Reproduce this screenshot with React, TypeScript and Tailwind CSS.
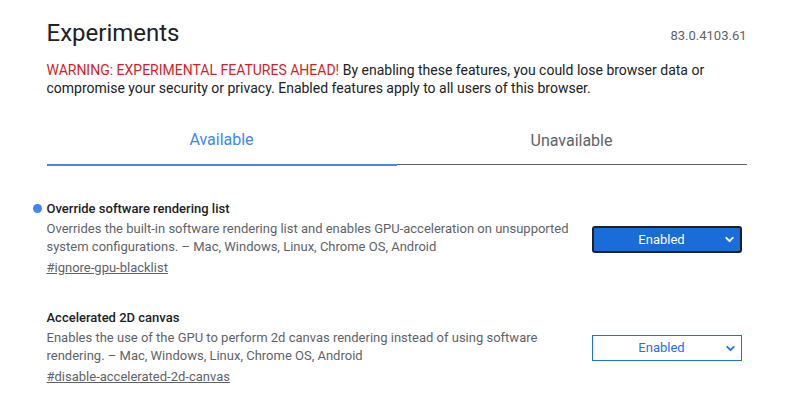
import { ChevronDown } from "lucide-react";

const experiments = [
  {
    name: "Override software rendering list",
    desc: "Overrides the built-in software rendering list and enables GPU-acceleration on unsupported system configurations. – Mac, Windows, Linux, Chrome OS, Android",
    link: "#ignore-gpu-blacklist",
    switched: true,
  },
  {
    name: "Accelerated 2D canvas",
    desc: "Enables the use of the GPU to perform 2d canvas rendering instead of using software rendering. – Mac, Windows, Linux, Chrome OS, Android",
    link: "#disable-accelerated-2d-canvas",
    switched: false,
  },
];

export default function App() {
  return (
    <div className="min-h-screen bg-white text-[#202124] font-['Roboto',sans-serif] text-[13px]">
      <div className="mx-auto w-[700px] pt-[17px]">
        <div className="flex items-start justify-between">
          <h1 className="text-[24px] leading-[32px] font-normal">Experiments</h1>
          <span className="mt-[10px] text-[13px] leading-[18px] text-[#5f6368]">83.0.4103.61</span>
        </div>
        <p className="mt-[12px] text-[14px] leading-[18px] text-[#202124]">
          <span className="text-[#d21f2a]">WARNING: EXPERIMENTAL FEATURES AHEAD!</span> By enabling these
          features, you could lose browser data or compromise your security or privacy. Enabled features apply
          to all users of this browser.
        </p>

        <div className="mt-[30px] flex">
          <div className="flex-1 h-[39px] flex items-start justify-center border-b-2 border-[#4285f4] text-[16px] leading-[24px] text-[#4285f4] pt-[1px]">
            Available
          </div>
          <div className="flex-1 h-[38px] flex items-start justify-center border-b border-[#5f6368] text-[16px] leading-[24px] text-[#5f6368] pt-[2px]">
            Unavailable
          </div>
        </div>

        <div className="mt-[34px] flex flex-col gap-[32px]">
          {experiments.map((e) => (
            <div key={e.link} className="flex items-start">
              <div className="w-[540px] relative">
                {e.switched && (
                  <span className="absolute -left-[14px] top-[4px] h-[9px] w-[9px] rounded-full bg-[#4285f4]" />
                )}
                <div className="font-medium text-[#202124] leading-[18px]">{e.name}</div>
                <p className="mt-[2px] leading-[18px] text-[#5f6368]">{e.desc}</p>
                <a className="mt-[3px] block leading-[18px] text-[#5f6368] underline" href={e.link}>
                  {e.link}
                </a>
              </div>
              <div className="ml-auto mr-[5px] mt-[26px]">
                {e.switched ? (
                  <div className="relative w-[150px] h-[27px] rounded-[3px] border-2 border-[#202124] bg-[#1a6dd8] text-white flex items-center justify-center pr-[10px]">
                    <span className="text-[13px]">Enabled</span>
                    <ChevronDown className="absolute right-[4px] top-[5px] h-[13px] w-[13px]" strokeWidth={3.5} />
                  </div>
                ) : (
                  <div className="relative w-[150px] h-[26px] border border-[#1a73e8] bg-white text-[#1a73e8] flex items-center justify-center pr-[10px]">
                    <span className="text-[13px]">Enabled</span>
                    <ChevronDown className="absolute right-[4px] top-[6px] h-[13px] w-[13px]" strokeWidth={3.5} />
                  </div>
                )}
              </div>
            </div>
          ))}
        </div>
      </div>
    </div>
  );
}
